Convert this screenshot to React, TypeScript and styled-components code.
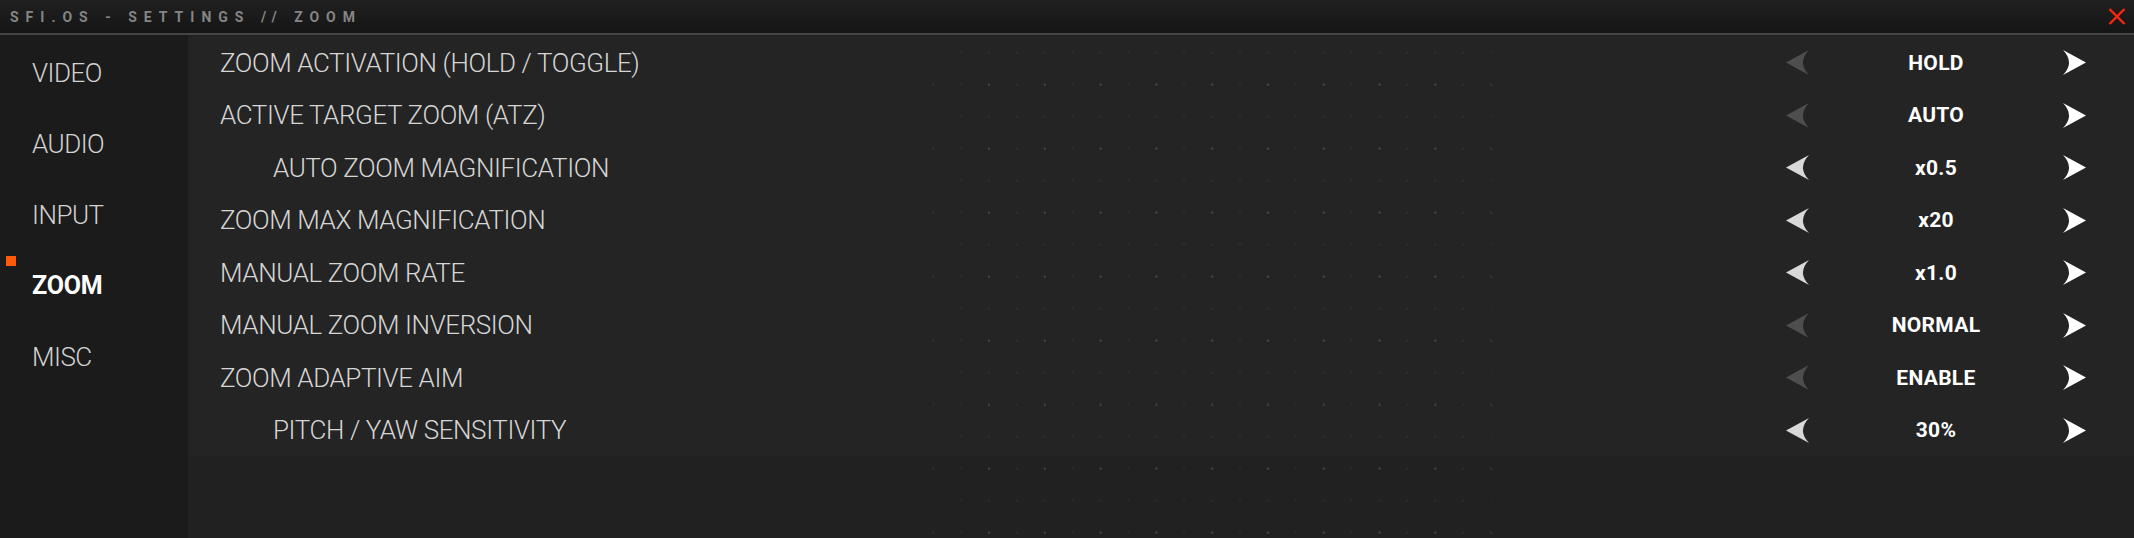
import styled, { createGlobalStyle } from "styled-components";

const GlobalStyle = createGlobalStyle`
  html, body {
    margin: 0;
    padding: 0;
    background: #212121;
  }
  body {
    font-family: Roboto, "Noto Sans", sans-serif;
    overflow: hidden;
  }
`;

const Window = styled.div`
  display: flex;
  flex-direction: column;
  height: 100vh;
  background: #212121;
`;

const TitleBar = styled.div`
  display: flex;
  align-items: center;
  justify-content: space-between;
  height: 33px;
  padding: 0 6px 0 10px;
  background: linear-gradient(to bottom, #202020, #151515);
  border-bottom: 2px solid #454545;
  flex-shrink: 0;
`;

const Title = styled.span`
  font-family: Roboto, sans-serif;
  font-weight: 700;
  font-size: 14px;
  letter-spacing: 7px;
  color: #858585;
`;

const CloseButton = styled.button`
  display: flex;
  align-items: center;
  justify-content: center;
  width: 22px;
  height: 22px;
  padding: 0;
  margin-top: -1px;
  border: none;
  background: transparent;
  cursor: pointer;
`;

const Body = styled.div`
  flex: 1;
  display: flex;
  min-height: 0;
`;

const Sidebar = styled.nav`
  width: 188px;
  flex-shrink: 0;
  background: #1b1b1b;
  padding-top: 2px;
  display: flex;
  flex-direction: column;
`;

const NavItem = styled.div<{ active?: boolean }>`
  position: relative;
  height: 71px;
  display: flex;
  align-items: center;
  padding-left: 32px;
  font-size: ${({ active }) => (active ? "25px" : "26px")};
  font-weight: ${({ active }) => (active ? 700 : 300)};
  letter-spacing: ${({ active }) => (active ? "-0.2px" : "-0.5px")};
  color: ${({ active }) => (active ? "#ffffff" : "#d2d2d2")};
  cursor: pointer;
`;

const ActiveMark = styled.span`
  position: absolute;
  left: 6px;
  top: 6px;
  width: 10px;
  height: 10px;
  background: #ff5a0a;
`;

// dot grid only shows in a band in the middle, faded out at both sides
const Content = styled.section`
  flex: 1;
  display: flex;
  flex-direction: column;
  padding-top: 2px;
  background-color: #212121;
  background-image:
    linear-gradient(
      to right,
      #212121 0,
      #212121 720px,
      rgba(33, 33, 33, 0) 800px,
      rgba(33, 33, 33, 0) 1270px,
      #212121 1350px
    ),
    radial-gradient(circle, #434343 0, #434343 1px, transparent 1.4px),
    radial-gradient(circle, #2c2c2c 0, #2c2c2c 0.9px, transparent 1.2px);
  background-size: 100% 100%, 55.8px 64px, 27.9px 32px;
  background-position: 0 0, -8px 17.7px, 6px 1.7px;
`;

const Row = styled.div`
  display: flex;
  align-items: center;
  height: 52.5px;
  background: rgba(255, 255, 255, 0.014);
  border-bottom: 1px solid rgba(0, 0, 0, 0.05);
  box-sizing: border-box;
`;

const Label = styled.div<{ indent?: boolean }>`
  flex: 1;
  padding-left: ${({ indent }) => (indent ? "85px" : "32px")};
  font-size: 26px;
  font-weight: 300;
  letter-spacing: -0.4px;
  color: #d6d6d6;
  white-space: nowrap;
`;

const Control = styled.div`
  display: grid;
  grid-template-columns: 23px 1fr 23px;
  align-items: center;
  width: 300px;
  margin-right: 48px;
`;

const ArrowButton = styled.button<{ tone: string }>`
  display: flex;
  padding: 0;
  border: none;
  background: transparent;
  color: ${({ tone }) => tone};
  cursor: pointer;
`;

const Value = styled.span`
  text-align: center;
  font-size: 21px;
  font-weight: 700;
  letter-spacing: 0.3px;
  color: #ffffff;
`;

type Setting = {
  label: string;
  value: string;
  indent?: boolean;
  atStart?: boolean;
};

const settings: Setting[] = [
  { label: "ZOOM ACTIVATION (HOLD / TOGGLE)", value: "HOLD", atStart: true },
  { label: "ACTIVE TARGET ZOOM (ATZ)", value: "AUTO", atStart: true },
  { label: "AUTO ZOOM MAGNIFICATION", value: "x0.5", indent: true },
  { label: "ZOOM MAX MAGNIFICATION", value: "x20" },
  { label: "MANUAL ZOOM RATE", value: "x1.0" },
  { label: "MANUAL ZOOM INVERSION", value: "NORMAL", atStart: true },
  { label: "ZOOM ADAPTIVE AIM", value: "ENABLE", atStart: true },
  { label: "PITCH / YAW SENSITIVITY", value: "30%", indent: true },
];

const sections = ["VIDEO", "AUDIO", "INPUT", "ZOOM", "MISC"];

const Arrow = ({ dir }: { dir: "left" | "right" }) => (
  <svg width="23" height="25" viewBox="0 0 23 25">
    {dir === "right" ? (
      <path d="M0 0 L23 12.5 L0 25 Q12 12.5 0 0 Z" fill="currentColor" />
    ) : (
      <path d="M23 0 L0 12.5 L23 25 Q11 12.5 23 0 Z" fill="currentColor" />
    )}
  </svg>
);

const App = () => {
  return (
    <>
      <GlobalStyle />
      <Window>
        <TitleBar>
          <Title>SFI.OS - SETTINGS // ZOOM</Title>
          <CloseButton aria-label="close">
            <svg width="18" height="17" viewBox="0 0 18 17">
              <path
                d="M1.5 1 L16.5 16 M16.5 1 L1.5 16"
                stroke="#ff2410"
                strokeWidth="2.4"
                fill="none"
              />
            </svg>
          </CloseButton>
        </TitleBar>
        <Body>
          <Sidebar>
            {sections.map((name) => (
              <NavItem key={name} active={name === "ZOOM"}>
                {name === "ZOOM" && <ActiveMark />}
                {name}
              </NavItem>
            ))}
          </Sidebar>
          <Content>
            {settings.map((s) => (
              <Row key={s.label}>
                <Label indent={s.indent}>{s.label}</Label>
                <Control>
                  <ArrowButton tone={s.atStart ? "#4e4e4e" : "#d8d8d8"}>
                    <Arrow dir="left" />
                  </ArrowButton>
                  <Value>{s.value}</Value>
                  <ArrowButton tone="#ffffff">
                    <Arrow dir="right" />
                  </ArrowButton>
                </Control>
              </Row>
            ))}
          </Content>
        </Body>
      </Window>
    </>
  );
};

export default App;
